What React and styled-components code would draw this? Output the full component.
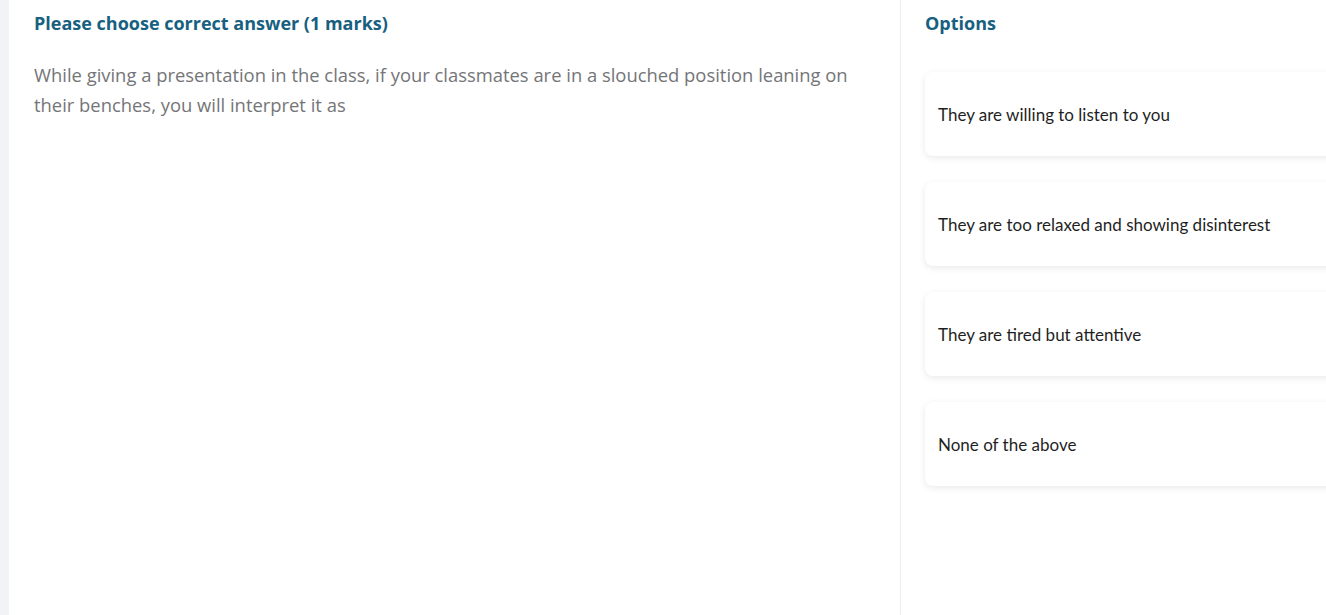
import React from 'react';
import styled, { createGlobalStyle } from 'styled-components';

const GlobalStyle = createGlobalStyle`
  html, body {
    margin: 0;
    padding: 0;
    background: #f1f3f5;
    overflow: hidden;
  }
  * {
    box-sizing: border-box;
  }
`;

const Page = styled.div`
  display: flex;
  height: 615px;
  padding-left: 9px;
  overflow: hidden;
`;

const QuestionPanel = styled.section`
  flex: 0 0 892px;
  background: #fff;
  border-right: 1px solid #ebedef;
  padding: 12px 25px 0 25px;
`;

const OptionsPanel = styled.section`
  flex: 0 0 480px;
  background: #fff;
  padding: 12px 0 0 24px;
`;

const Heading = styled.h2`
  margin: 0;
  font-family: 'Open Sans', sans-serif;
  font-size: 18px;
  font-weight: 700;
  line-height: 22px;
  color: #17607f;
`;

const QuestionText = styled.p`
  margin: 26px 0 0;
  font-family: 'Open Sans', sans-serif;
  font-size: 18.4px;
  line-height: 30px;
  color: #747577;
`;

const OptionList = styled.div`
  display: flex;
  flex-direction: column;
  gap: 26px;
  margin-top: 38px;
`;

const OptionCard = styled.div`
  display: flex;
  align-items: center;
  height: 84px;
  padding: 0 13px;
  background: #fff;
  border-radius: 8px;
  box-shadow: 0 2px 7px rgba(0, 0, 0, 0.09);
  font-family: Lato, 'Noto Sans', sans-serif;
  font-size: 17px;
  color: #1f1f1f;
  cursor: pointer;
`;

const options = [
  'They are willing to listen to you',
  'They are too relaxed and showing disinterest',
  'They are tired but attentive',
  'None of the above',
];

const App = () => (
  <>
    <GlobalStyle />
    <Page>
      <QuestionPanel>
        <Heading>Please choose correct answer (1 marks)</Heading>
        <QuestionText>
          While giving a presentation in the class, if your classmates are in a slouched position leaning on
          their benches, you will interpret it as
        </QuestionText>
      </QuestionPanel>
      <OptionsPanel>
        <Heading>Options</Heading>
        <OptionList>
          {options.map((opt) => (
            <OptionCard key={opt}>{opt}</OptionCard>
          ))}
        </OptionList>
      </OptionsPanel>
    </Page>
  </>
);

export default App;
